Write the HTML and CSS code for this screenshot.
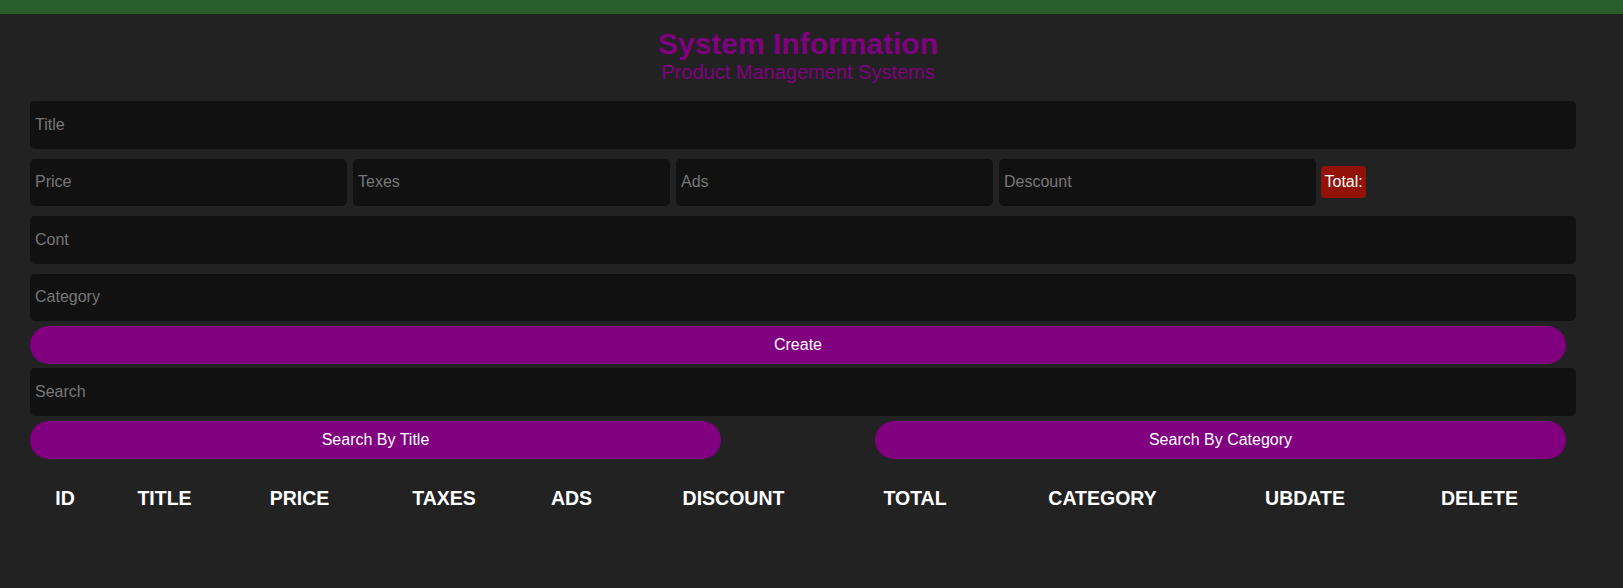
FILE: index.html
```html
<!DOCTYPE html>
<html lang="en">
<head>
<meta charset="utf-8">
<title>CRUDS</title>
<link rel="stylesheet" href="styles.css">
</head>
<body>
<div class="topbar"></div>
<main class="crud">
  <header class="head">
    <h1 class="head-title">System Information</h1>
    <p class="head-sub">Product Management Systems</p>
  </header>
  <section class="inputs">
    <input class="field" type="text" placeholder="Title">
    <div class="price-row">
      <input class="field field-price" type="number" placeholder="Price">
      <input class="field field-price" type="number" placeholder="Texes">
      <input class="field field-price" type="number" placeholder="Ads">
      <input class="field field-price" type="number" placeholder="Descount">
      <small class="total">Total:</small>
    </div>
    <input class="field" type="number" placeholder="Cont">
    <input class="field field-last" type="text" placeholder="Category">
    <button class="btn btn-create">Create</button>
  </section>
  <section class="search-block">
    <input class="field" type="text" placeholder="Search">
    <div class="search-btns">
      <button class="btn btn-half">Search By Title</button>
      <button class="btn btn-half">Search By Category</button>
    </div>
  </section>
  <table class="table">
    <colgroup>
      <col class="c-id"><col class="c-title"><col class="c-price"><col class="c-taxes"><col class="c-ads">
      <col class="c-discount"><col class="c-total"><col class="c-category"><col class="c-update"><col class="c-delete">
    </colgroup>
    <thead>
      <tr>
        <th>id</th><th>title</th><th>price</th><th>taxes</th><th>ads</th>
        <th>discount</th><th>total</th><th>category</th><th>ubdate</th><th>delete</th>
      </tr>
    </thead>
    <tbody></tbody>
  </table>
</main>
</body>
</html>
```
FILE: styles.css
```css
* { box-sizing: border-box; }
html, body { margin: 0; padding: 0; }
body {
  background: #222222;
  color: #ffffff;
  font-family: "Liberation Sans", Arial, sans-serif;
  font-size: 16px;
  min-height: 100vh;
}
.topbar { height: 14px; background: #295e2b; }
.crud { width: 1536px; margin-left: 30px; }

.head { text-align: center; padding-top: 14.5px; }
.head-title {
  margin: 0;
  font-size: 30px;
  line-height: 30px;
  font-weight: bold;
  color: #800080;
}
.head-sub {
  margin: 3.5px 0 0;
  font-size: 20px;
  line-height: 20px;
  color: #800080;
}

.inputs { display: flex; flex-direction: column; gap: 10px; margin-top: 19px; }
.field {
  display: block;
  width: 1546px;
  height: 47.5px;
  padding: 0 5px;
  border: none;
  outline: none;
  border-radius: 5px;
  background: #111111;
  color: #ffffff;
  font-family: inherit;
  font-size: 16px;
}
.field::placeholder { color: #777777; }
.field::-webkit-outer-spin-button,
.field::-webkit-inner-spin-button { -webkit-appearance: none; margin: 0; }

.price-row { display: flex; align-items: center; gap: 6px; }
.field-price { width: 317px; }
.total {
  display: flex;
  align-items: center;
  height: 32px;
  padding: 0 3.5px;
  border-radius: 4px;
  background: #931208;
  color: #ffffff;
  font-size: 16px;
  margin-left: -1px;
}

.btn {
  display: block;
  height: 38px;
  border: none;
  border-radius: 19px;
  background: #800080;
  color: #ffffff;
  font-family: inherit;
  font-size: 16px;
  cursor: pointer;
  padding: 0;
}
.btn-create { width: 1536px; margin-top: -5px; }

.search-block { display: flex; flex-direction: column; gap: 5px; margin-top: 4px; }
.search-btns { display: flex; justify-content: space-between; }
.btn-half { width: 691px; }

.table {
  width: 1536px;
  margin-top: 21px;
  border-collapse: collapse;
  table-layout: fixed;
}
.table th {
  height: 38px;
  padding: 0;
  text-align: center;
  vertical-align: middle;
  text-transform: uppercase;
  font-size: 19.5px;
  font-weight: bold;
  color: #ffffff;
}
.c-id { width: 70px; }
.c-title { width: 129px; }
.c-price { width: 141px; }
.c-taxes { width: 148px; }
.c-ads { width: 107px; }
.c-discount { width: 217px; }
.c-total { width: 146px; }
.c-category { width: 229px; }
.c-update { width: 176px; }
.c-delete { width: 173px; }
```
